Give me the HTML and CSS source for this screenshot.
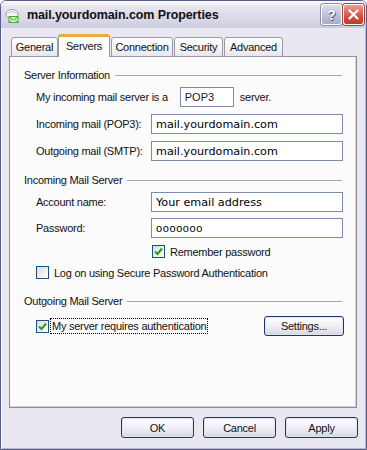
FILE: index.html
```html
<!DOCTYPE html>
<html lang="en">
<head>
    <meta charset="UTF-8">
    <meta name="viewport" content="width=device-width, initial-scale=1.0">
    <title>mail.yourdomain.com Properties</title>
    <link rel="stylesheet" href="styles.css">
</head>
<body>

<div class="window">
    <div class="titlebar">
        <svg class="app-icon" width="16" height="16" viewBox="0 0 16 16">
            <ellipse cx="7" cy="6" rx="6" ry="4.5" fill="#f4f4f6" stroke="#9c9cae" stroke-width="1"/>
            <path d="M3 5 Q7 2 11 5" fill="none" stroke="#c4c4d2" stroke-width="1"/>
            <rect x="4" y="8.5" width="9" height="6" fill="#e8f6c8" stroke="#3aa83a" stroke-width="1"/>
            <path d="M4 8.5 L8.5 12 L13 8.5 M4 14.5 L7 11.5 M13 14.5 L10 11.5" fill="none" stroke="#3aa83a" stroke-width="1"/>
        </svg>
        <span class="title">mail.yourdomain.com Properties</span>
        <div class="caption-buttons">
            <div class="cap help">?</div>
            <div class="cap close">
                <svg width="11" height="11" viewBox="0 0 11 11">
                    <path d="M1.5 1.5 L9.5 9.5 M9.5 1.5 L1.5 9.5" stroke="#fff" stroke-width="2.2" stroke-linecap="round"/>
                </svg>
            </div>
        </div>
    </div>

    <div class="client">
        <div class="tabs">
            <div class="tab tab-general">General</div>
            <div class="tab tab-servers active">Servers</div>
            <div class="tab tab-connection">Connection</div>
            <div class="tab tab-security">Security</div>
            <div class="tab tab-advanced">Advanced</div>
        </div>

        <div class="panel">
            <div class="group-title"><span>Server Information</span></div>

            <div class="row row-type">
                <span>My incoming mail server is a</span>
                <span class="field field-small">POP3</span>
                <span>server.</span>
            </div>

            <div class="row form-row">
                <span class="lbl">Incoming mail (POP3):</span>
                <span class="field">mail.yourdomain.com</span>
            </div>
            <div class="row form-row">
                <span class="lbl">Outgoing mail (SMTP):</span>
                <span class="field">mail.yourdomain.com</span>
            </div>

            <div class="group-title group-2"><span>Incoming Mail Server</span></div>

            <div class="row form-row row-account">
                <span class="lbl">Account name:</span>
                <span class="field">Your email address</span>
            </div>
            <div class="row form-row row-password">
                <span class="lbl">Password:</span>
                <span class="field field-pass">ooooooo</span>
            </div>

            <div class="check-row row-remember">
                <span class="checkbox checked">
                    <svg width="11" height="11" viewBox="0 0 11 11"><path d="M2 5.5 L4.5 8 L9 2.5" fill="none" stroke="#21a121" stroke-width="2"/></svg>
                </span>
                <span>Remember password</span>
            </div>
            <div class="check-row row-spa">
                <span class="checkbox"></span>
                <span>Log on using Secure Password Authentication</span>
            </div>

            <div class="group-title group-3"><span>Outgoing Mail Server</span></div>

            <div class="auth-row">
                <div class="check-row">
                    <span class="checkbox checked">
                        <svg width="11" height="11" viewBox="0 0 11 11"><path d="M2 5.5 L4.5 8 L9 2.5" fill="none" stroke="#21a121" stroke-width="2"/></svg>
                    </span>
                    <span class="focus">My server requires authentication</span>
                </div>
                <div class="btn btn-settings">Settings...</div>
            </div>
        </div>

        <div class="footer">
            <div class="btn">OK</div>
            <div class="btn">Cancel</div>
            <div class="btn">Apply</div>
        </div>
    </div>
</div>

</body>
</html>
```

FILE: styles.css
```css
* {
    box-sizing: border-box;
}
body {
    margin: 0;
    background: #ffffff;
    font-family: "Liberation Sans", Arial, sans-serif;
    font-size: 11px;
    letter-spacing: -0.25px;
    color: #111;
}
.window {
    width: 367px;
    height: 450px;
    border: 1px solid #5a5d86;
    border-radius: 6px 6px 0 0;
    background: #e9e7ef;
    display: flex;
    flex-direction: column;
    box-shadow: inset 1px 0 0 #fafafd, inset -1px 0 0 #b6b6ca, inset 0 -1px 0 #b6b6ca;
}
.titlebar {
    height: 27px;
    display: flex;
    align-items: center;
    padding: 0 2px 0 4px;
    border-radius: 5px 5px 0 0;
    background: linear-gradient(#fbfbfd 0, #e4e3ee 25%, #d8d7e6 70%, #cdccde 100%);
}
.app-icon {
    margin-top: 2px;
}
.title {
    margin-left: 6px;
    font-family: "Liberation Sans", Arial, sans-serif;
    font-weight: bold;
    font-size: 12.5px;
    letter-spacing: -0.1px;
    color: #101010;
    flex: 1;
}
.caption-buttons {
    display: flex;
    gap: 1px;
}
.cap {
    width: 21px;
    height: 21px;
    border: 1px solid #ffffff;
    border-radius: 3px;
    display: flex;
    align-items: center;
    justify-content: center;
    box-shadow: 0 0 0 1px #8d8fb0;
}
.help {
    background: linear-gradient(#dcdde9, #a9abc9);
    color: #fff;
    font-weight: bold;
    font-size: 14px;
    letter-spacing: 0;
    text-shadow: 0 0 1px #4a4c74, 1px 1px 0 #5e6088;
}
.close {
    background: linear-gradient(#eba094, #cf5244 60%, #c0392f);
    box-shadow: 0 0 0 1px #a04040;
}
.client {
    flex: 1;
    display: flex;
    flex-direction: column;
    padding: 0 9px 0 8px;
}
.tabs {
    display: flex;
    align-items: flex-end;
    height: 29px;
    padding-left: 2px;
    margin-bottom: -1px;
    position: relative;
    z-index: 1;
}
.tab {
    height: 20px;
    border: 1px solid #9a9aa6;
    border-radius: 3px 3px 0 0;
    background: linear-gradient(#ffffff, #f1f1f4 70%, #e6e6ec);
    display: flex;
    align-items: center;
    justify-content: center;
    margin-right: 1px;
    padding-bottom: 1px;
}
.tab-general {
    width: 47px;
    margin-right: 0;
}
.tab-servers {
    width: 52px;
}
.tab-connection {
    width: 62px;
}
.tab-security {
    width: 49px;
}
.tab-advanced {
    width: 59px;
}
.tab.active {
    height: 23px;
    background: #fcfcfe;
    border-top: 3px solid #f2a83a;
    border-bottom: none;
    padding-bottom: 3px;
}
.panel {
    height: 352px;
    background: #fbfbfc;
    border: 1px solid #8f8f9c;
    box-shadow: inset -1px -1px 0 #d0d0d8;
    padding: 11px 14px 0 14px;
}
.group-title {
    display: flex;
    align-items: center;
    height: 14px;
    width: 318px;
}
.group-title::after {
    content: "";
    flex: 1;
    height: 1px;
    margin-left: 5px;
    background: #a6a6b0;
}
.group-2 {
    margin-top: 12px;
}
.group-3 {
    margin-top: 15px;
}
.row {
    margin-left: 12px;
    width: 307px;
    height: 20px;
    display: flex;
    align-items: center;
}
.row-type {
    margin-top: 5px;
}
.row-type .field-small {
    margin-left: 12px;
    margin-right: 6px;
}
.form-row {
    margin-top: 7px;
    display: grid;
    grid-template-columns: 115px 192px;
}
.row-account {
    margin-top: 5px;
}
.row-password {
    margin-top: 6px;
}
.lbl {
    padding-bottom: 1px;
}
.field {
    height: 20px;
    border: 1px solid #7f8bab;
    background: #ffffff;
    display: flex;
    align-items: center;
    padding-left: 4px;
    font-family: "DejaVu Sans", Verdana, sans-serif;
    font-size: 11.2px;
    letter-spacing: 0;
    color: #000;
}
.field-small {
    width: 54px;
    font-family: "Liberation Sans", Arial, sans-serif;
    font-size: 11px;
    color: #222;
}
.field-pass {
    font-family: "Liberation Sans", Arial, sans-serif;
    font-size: 11px;
    letter-spacing: 0.6px;
}
.check-row {
    display: flex;
    align-items: center;
    height: 13px;
    gap: 5px;
}
.row-remember {
    margin-top: 7px;
    margin-left: 128px;
}
.row-spa {
    margin-top: 8px;
    margin-left: 12px;
}
.checkbox {
    width: 13px;
    height: 13px;
    border: 1px solid #1c5180;
    background: linear-gradient(135deg, #dcdcd7, #ffffff);
    display: flex;
    align-items: center;
    justify-content: center;
}
.auth-row {
    margin-top: 8px;
    margin-left: 12px;
    width: 307px;
    height: 20px;
    display: flex;
    align-items: center;
    justify-content: space-between;
}
.auth-row .check-row {
    gap: 2px;
}
.focus {
    outline: 1px dotted #000;
    padding: 1px;
}
.btn {
    width: 73px;
    height: 21px;
    border: 1px solid #1e3570;
    border-radius: 3px;
    background: linear-gradient(#ffffff, #f0f0f5 50%, #dcdce6 90%, #c8c8d6);
    box-shadow: inset 0 0 0 1px #e4e4f0;
    display: flex;
    align-items: center;
    justify-content: center;
}
.btn-settings {
    width: 80px;
    height: 20px;
    margin-right: -1px;
}
.footer {
    display: flex;
    justify-content: flex-end;
    gap: 9px;
    margin-top: 9px;
    margin-right: -1px;
}
```
